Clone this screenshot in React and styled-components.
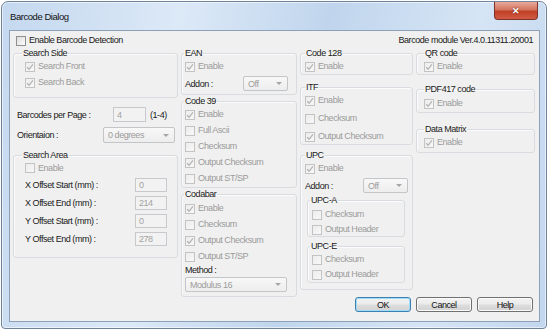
import React from "react";
import styled, { createGlobalStyle } from "styled-components";

const GlobalStyle = createGlobalStyle`
  html, body {
    margin: 0;
    padding: 0;
    background: #fff;
  }
  body {
    font-family: "Liberation Sans", Arial, sans-serif;
    font-size: 9px;
    letter-spacing: -0.45px;
    color: #1a1a1a;
  }
`;

const Check = () => (
  <svg width="8" height="8" viewBox="0 0 8 8">
    <path d="M1.2 4.3 L3.1 6.3 L6.9 1.4" fill="none" stroke="#b4b4b4" strokeWidth="1.3" />
  </svg>
);

const CheckItem = ({ label, checked, enabled, height }) => (
  <CheckRow $enabled={enabled} $h={height}>
    <Box $enabled={enabled}>{checked && <Check />}</Box>
    <span>{label}</span>
  </CheckRow>
);

const Dropdown = ({ value, width }) => (
  <Select $w={width}>
    <span>{value}</span>
    <Arrow />
  </Select>
);

const App = () => {
  return (
    <>
      <GlobalStyle />
      <Window>
        <TitleBar>
          <Title>Barcode Dialog</Title>
          <CloseButton>✕</CloseButton>
        </TitleBar>
        <Client>
          <TopRow>
            <CheckItem label="Enable Barcode Detection" enabled />
            <Version>Barcode module Ver.4.0.11311.20001</Version>
          </TopRow>

          <Columns>
            <Column>
              <Group $h={50}>
                <Legend $indent={8}>Search Side</Legend>
                <Body $top={3} $left={11} $gap={5}>
                  <CheckItem label="Search Front" checked />
                  <CheckItem label="Search Back" checked />
                </Body>
              </Group>

              <FieldRow $mt={9} $h={15} $left={4}>
                <Label $w={96}>Barcodes per Page :</Label>
                <TextBox $w={33}>4</TextBox>
                <Hint>(1-4)</Hint>
              </FieldRow>
              <FieldRow $mt={5} $h={16} $left={4}>
                <Label $w={86}>Orientaion :</Label>
                <Dropdown value="0 degrees" width={72} />
              </FieldRow>

              <Group $h={108} $mt={7}>
                <Legend $indent={8}>Search Area</Legend>
                <Body $top={2} $left={11} $gap={4}>
                  <CheckItem label="Enable" height={12} />
                  <FieldRow $h={14}>
                    <Label $w={110}>X Offset Start (mm) :</Label>
                    <TextBox $w={32}>0</TextBox>
                  </FieldRow>
                  <FieldRow $h={14}>
                    <Label $w={110}>X Offset End (mm) :</Label>
                    <TextBox $w={32}>214</TextBox>
                  </FieldRow>
                  <FieldRow $h={14}>
                    <Label $w={110}>Y Offset Start (mm) :</Label>
                    <TextBox $w={32}>0</TextBox>
                  </FieldRow>
                  <FieldRow $h={14}>
                    <Label $w={110}>Y Offset End (mm) :</Label>
                    <TextBox $w={32}>278</TextBox>
                  </FieldRow>
                </Body>
              </Group>
            </Column>

            <Column>
              <Group $h={47}>
                <Legend $indent={2}>EAN</Legend>
                <Body $top={3} $left={3} $gap={4}>
                  <CheckItem label="Enable" checked />
                  <FieldRow $h={15}>
                    <Label $w={58}>Addon :</Label>
                    <Dropdown value="Off" width={45} />
                  </FieldRow>
                </Body>
              </Group>

              <Group $h={92} $mt={1}>
                <Legend $indent={2}>Code 39</Legend>
                <Body $top={3} $left={3} $gap={5}>
                  <CheckItem label="Enable" checked />
                  <CheckItem label="Full Ascii" />
                  <CheckItem label="Checksum" />
                  <CheckItem label="Output Checksum" checked />
                  <CheckItem label="Output ST/SP" />
                </Body>
              </Group>

              <Group $h={108} $mt={1}>
                <Legend $indent={2}>Codabar</Legend>
                <Body $top={4} $left={3} $gap={5}>
                  <CheckItem label="Enable" checked />
                  <CheckItem label="Checksum" />
                  <CheckItem label="Output Checksum" checked />
                  <CheckItem label="Output ST/SP" />
                </Body>
                <Method>Method :</Method>
                <MethodSelect>
                  <Dropdown value="Modulus 16" width={102} />
                </MethodSelect>
              </Group>
            </Column>

            <Column>
              <Group $h={27}>
                <Legend $indent={4}>Code 128</Legend>
                <Body $top={3} $left={4}>
                  <CheckItem label="Enable" checked />
                </Body>
              </Group>

              <Group $h={63} $mt={7}>
                <Legend $indent={4}>ITF</Legend>
                <Body $top={3} $left={4} $gap={7}>
                  <CheckItem label="Enable" checked />
                  <CheckItem label="Checksum" />
                  <CheckItem label="Output Checksum" checked />
                </Body>
              </Group>

              <Group $h={140} $mt={5}>
                <Legend $indent={4}>UPC</Legend>
                <Body $top={3} $left={4} $gap={4}>
                  <CheckItem label="Enable" checked />
                  <FieldRow $h={15}>
                    <Label $w={58}>Addon :</Label>
                    <Dropdown value="Off" width={45} />
                  </FieldRow>
                </Body>
                <SubGroup $h={42} $mt={2}>
                  <Legend $indent={2}>UPC-A</Legend>
                  <Body $top={4} $left={4} $gap={4}>
                    <CheckItem label="Checksum" />
                    <CheckItem label="Output Header" />
                  </Body>
                </SubGroup>
                <SubGroup $h={42} $mt={4}>
                  <Legend $indent={2}>UPC-E</Legend>
                  <Body $top={3} $left={4} $gap={4}>
                    <CheckItem label="Checksum" />
                    <CheckItem label="Output Header" />
                  </Body>
                </SubGroup>
              </Group>
            </Column>

            <Column>
              <Group $h={27}>
                <Legend $indent={7}>QR code</Legend>
                <Body $top={3} $left={7}>
                  <CheckItem label="Enable" checked />
                </Body>
              </Group>
              <Group $h={29} $mt={9}>
                <Legend $indent={7}>PDF417 code</Legend>
                <Body $top={4} $left={7}>
                  <CheckItem label="Enable" checked />
                </Body>
              </Group>
              <Group $h={29} $mt={11}>
                <Legend $indent={7}>Data Matrix</Legend>
                <Body $top={3} $left={7}>
                  <CheckItem label="Enable" checked />
                </Body>
              </Group>
            </Column>
          </Columns>

          <ButtonRow>
            <Button $default>OK</Button>
            <Button>Cancel</Button>
            <Button>Help</Button>
          </ButtonRow>
        </Client>
      </Window>
    </>
  );
};

export default App;

const Window = styled.div`
  margin: 1px 0 0 1px;
  width: 546px;
  height: 328px;
  box-sizing: border-box;
  border: 1px solid #6f839b;
  border-radius: 7px 7px 4px 4px;
  background: linear-gradient(100deg, #c4d8ef 0%, #dce9f7 30%, #c0d5ed 55%, #d6e5f5 80%, #c2d6ee 100%);
  box-shadow: inset 0 0 0 1px rgba(255, 255, 255, 0.55);
  padding: 0 6px 6px 7px;
  display: flex;
  flex-direction: column;
`;

const TitleBar = styled.div`
  height: 28px;
  display: flex;
  justify-content: space-between;
  align-items: flex-start;
`;

const Title = styled.div`
  padding: 9px 0 0 1px;
  font-size: 9.5px;
  color: #111;
`;

const CloseButton = styled.div`
  width: 44px;
  height: 18px;
  margin-right: 2px;
  box-sizing: border-box;
  border: 1px solid #7e3229;
  border-top: none;
  border-radius: 0 0 4px 4px;
  background: linear-gradient(#e9a99b 0%, #d2765f 45%, #c13f27 55%, #d15a43 100%);
  color: #fff;
  font-size: 9px;
  font-weight: bold;
  letter-spacing: 0;
  display: flex;
  align-items: center;
  justify-content: center;
  text-shadow: 0 0 2px #5a1a12;
`;

const Client = styled.div`
  flex: 1;
  box-sizing: border-box;
  border: 1px solid #8ca1b8;
  background: #f0f0f0;
  padding: 4px 4px 0 3px;
  display: flex;
  flex-direction: column;
`;

const TopRow = styled.div`
  height: 13px;
  display: flex;
  justify-content: space-between;
  align-items: flex-start;
  padding-left: 3px;
`;

const Version = styled.div`
  margin-right: 2px;
  line-height: 11px;
`;

const Columns = styled.div`
  display: grid;
  grid-template-columns: 165px 116px 113px 119px;
  column-gap: 3px;
  align-items: start;
`;

const Column = styled.div`
  display: flex;
  flex-direction: column;
`;

const Group = styled.fieldset`
  margin: ${(p) => p.$mt || 0}px 0 0 0;
  padding: 0;
  min-width: 0;
  height: ${(p) => p.$h}px;
  box-sizing: border-box;
  border: 1px solid #d8dce0;
  border-radius: 3px;
  box-shadow: inset 1px 1px 0 #fbfbfb;
`;

const SubGroup = styled(Group)`
  margin-left: 6px;
  width: 98px;
`;

const Legend = styled.legend`
  margin-left: ${(p) => p.$indent}px;
  padding: 0 1px;
  line-height: 10px;
  color: #1a1a1a;
`;

const Body = styled.div`
  padding: ${(p) => p.$top}px 0 0 ${(p) => p.$left}px;
  display: flex;
  flex-direction: column;
  gap: ${(p) => p.$gap || 0}px;
`;

const CheckRow = styled.div`
  display: flex;
  align-items: center;
  gap: 3px;
  height: ${(p) => p.$h || 11}px;
  line-height: 11px;
  color: ${(p) => (p.$enabled ? "#1a1a1a" : "#9b9b9b")};
  white-space: nowrap;
`;

const Box = styled.div`
  width: 10px;
  height: 10px;
  box-sizing: border-box;
  flex-shrink: 0;
  border: 1px solid ${(p) => (p.$enabled ? "#8e8f8f" : "#c3c3c3")};
  background: ${(p) =>
    p.$enabled
      ? "linear-gradient(135deg, #dcdcdc, #fdfdfd)"
      : "linear-gradient(135deg, #ececec, #f8f8f8)"};
  display: flex;
  align-items: center;
  justify-content: center;
`;

const FieldRow = styled.div`
  display: flex;
  align-items: center;
  height: ${(p) => p.$h}px;
  margin-top: ${(p) => p.$mt || 0}px;
  padding-left: ${(p) => p.$left || 0}px;
  white-space: nowrap;
`;

const Label = styled.div`
  width: ${(p) => p.$w}px;
  flex-shrink: 0;
  color: #1a1a1a;
`;

const TextBox = styled.div`
  width: ${(p) => p.$w}px;
  height: 100%;
  box-sizing: border-box;
  border: 1px solid #c7c9cc;
  background: #f2f2f2;
  color: #a2a2a2;
  padding-left: 3px;
  display: flex;
  align-items: center;
`;

const Hint = styled.div`
  margin-left: 4px;
`;

const Select = styled.div`
  width: ${(p) => p.$w}px;
  height: 100%;
  box-sizing: border-box;
  border: 1px solid #c3c5c8;
  border-radius: 2px;
  background: linear-gradient(#f8f8f8, #ededed);
  color: #9c9c9c;
  padding: 0 5px 0 4px;
  display: flex;
  align-items: center;
  justify-content: space-between;
`;

const Arrow = styled.div`
  width: 0;
  height: 0;
  border-left: 3px solid transparent;
  border-right: 3px solid transparent;
  border-top: 3px solid #a6a6a6;
`;

const Method = styled.div`
  margin: 3px 0 0 3px;
  height: 10px;
  line-height: 10px;
`;

const MethodSelect = styled.div`
  margin: 2px 0 0 3px;
  height: 15px;
  display: flex;
`;

const ButtonRow = styled.div`
  display: flex;
  justify-content: flex-end;
  gap: 5px;
  height: 15px;
  padding-right: 2px;
`;

const Button = styled.div`
  width: 56px;
  height: 15px;
  box-sizing: border-box;
  border: 1px solid ${(p) => (p.$default ? "#3c7fb1" : "#707070")};
  border-radius: 3px;
  background: linear-gradient(#f3f3f3 0%, #ebebeb 48%, #dddddd 52%, #d2d2d2 100%);
  box-shadow: ${(p) => (p.$default ? "inset 0 0 0 1px #9fdcf7" : "inset 0 0 0 1px #fbfbfb")};
  color: #111;
  display: flex;
  align-items: center;
  justify-content: center;
`;
